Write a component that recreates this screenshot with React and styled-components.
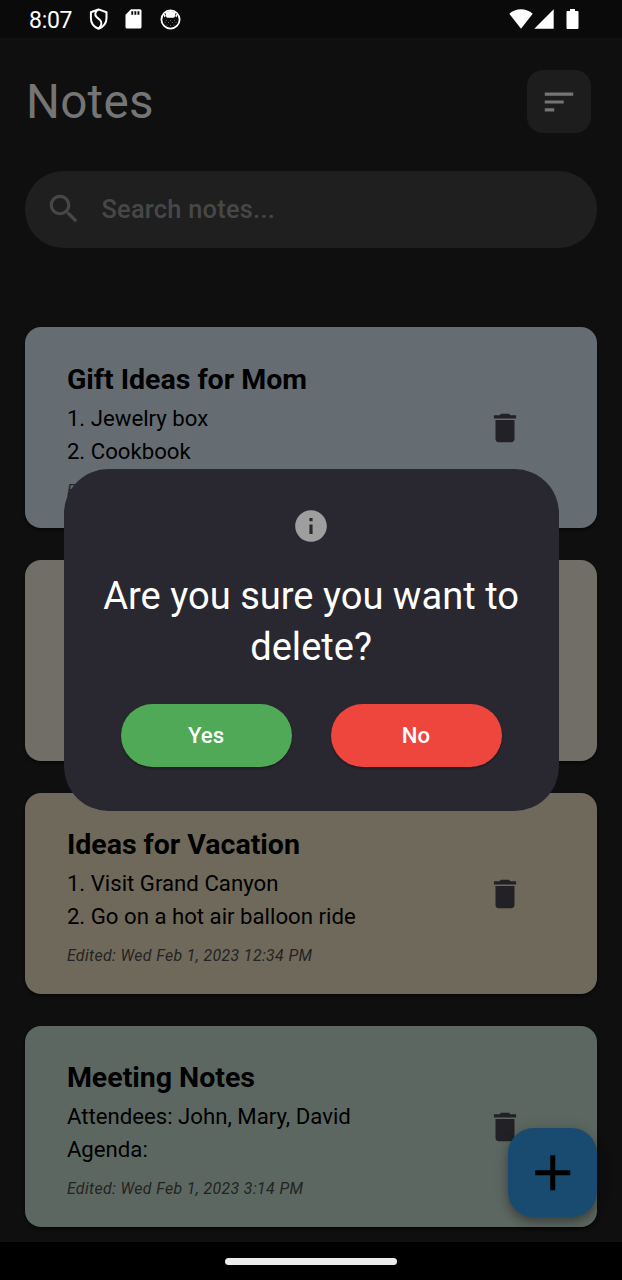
import React from "react";
import styled, { createGlobalStyle } from "styled-components";

const GlobalStyle = createGlobalStyle`
  * { box-sizing: border-box; }
  body { margin: 0; background: #0f0f0f; font-family: Roboto, "Liberation Sans", sans-serif; }
`;

const Screen = styled.div`
  position: relative;
  width: 622px;
  height: 1280px;
  overflow: hidden;
  display: flex;
  flex-direction: column;
  background: #0f0f0f;
`;

const StatusBar = styled.header`
  height: 38px;
  flex: none;
  display: flex;
  justify-content: space-between;
  padding: 0 43.5px 0 29px;
  background: #0a0a0a;
  color: #fff;
`;

const StatusGroup = styled.div`
  display: flex;
  align-items: center;
  svg { display: block; }
`;

const Clock = styled.span`
  font-size: 23px;
  line-height: 38px;
  letter-spacing: -0.3px;
  width: 60px;
  padding-top: 3px;
`;

const StatusIcons = styled(StatusGroup)`
  gap: ${(p) => p.$gap}px;
`;

const Content = styled.main`
  flex: 1;
  min-height: 0;
  overflow: hidden;
  padding: 32px 25px 0 25.4px;
`;

const TitleRow = styled.div`
  display: flex;
  justify-content: space-between;
  align-items: center;
  height: 63px;
  padding-right: 6.5px;
`;

const PageTitle = styled.h1`
  margin: 2px 0 0 0.5px;
  font-weight: 400;
  font-size: 47.6px;
  line-height: 63px;
  letter-spacing: 0.3px;
  color: #757575;
`;

const SortButton = styled.button`
  width: 63.5px;
  height: 63.5px;
  padding: 0;
  border: 0;
  border-radius: 16px;
  background: #1d1d1d;
  display: grid;
  place-items: center;
`;

const SearchField = styled.div`
  margin-top: 38px;
  height: 76.5px;
  border-radius: 38px;
  background: #1f1f1f;
  display: flex;
  align-items: center;
  padding-left: 19.2px;
  gap: 18.9px;
  font-size: 25.4px;
  font-weight: 500;
  letter-spacing: 0.24px;
  color: #474747;
`;

const NoteList = styled.div`
  margin-top: 79.5px;
  display: flex;
  flex-direction: column;
  gap: 31.6px;
`;

const NoteCard = styled.article`
  height: 201.4px;
  flex: none;
  border-radius: 16px;
  background: ${(p) => p.$color};
  box-shadow: 0 2px 3px rgba(0, 0, 0, 0.5);
  padding: 31.5px 73px 0 41.5px;
  display: flex;
  justify-content: space-between;
`;

const NoteTitle = styled.h2`
  margin: 0;
  font-size: 28.56px;
  line-height: 42px;
  font-weight: 700;
  letter-spacing: -0.03px;
  color: #000;
`;

const NoteBody = styled.p`
  margin: 1px 0 0;
  font-size: 22.2px;
  line-height: 33px;
  color: #000;
  white-space: pre-line;
`;

const NoteDate = styled.p`
  margin: 12px 0 0;
  font-size: 15.9px;
  line-height: 22px;
  font-style: italic;
  letter-spacing: 0.37px;
  color: #232323;
`;

const DeleteButton = styled.button`
  align-self: flex-start;
  margin-top: 50.5px;
  padding: 0;
  border: 0;
  background: none;
  svg { display: block; }
`;

const NavBar = styled.footer`
  height: 38px;
  flex: none;
  background: #000;
  display: flex;
  justify-content: center;
  padding-top: 16px;
`;

const Handle = styled.div`
  width: 172px;
  height: 6.5px;
  border-radius: 4px;
  background: #ececec;
`;

const AddButton = styled.button`
  position: absolute;
  left: 508px;
  top: 1128px;
  width: 89px;
  height: 89px;
  padding: 0;
  border: 0;
  border-radius: 25.4px;
  background: #194a70;
  box-shadow: 0 5px 10px rgba(0, 0, 0, 0.3), 0 2px 16px rgba(0, 0, 0, 0.12);
  display: grid;
  place-items: center;
`;

const Dialog = styled.section`
  position: absolute;
  left: 63.6px;
  top: 469px;
  width: 495px;
  height: 342px;
  border-radius: 44.4px;
  background: #29272f;
  display: flex;
  flex-direction: column;
  align-items: center;
  padding-top: 38px;
  svg { display: block; }
`;

const Question = styled.p`
  margin: 26.4px 0 0;
  width: 419px;
  text-align: center;
  font-size: 38.1px;
  line-height: 50.8px;
  color: #fff;
  white-space: nowrap;
`;

const Actions = styled.div`
  margin-top: 31px;
  display: flex;
  gap: 38.9px;
`;

const ActionButton = styled.button`
  width: 171px;
  height: 63.5px;
  padding: 0 0 1px;
  border: 0;
  border-radius: 32px;
  background: ${(p) => p.$color};
  box-shadow: 0 1.5px 2px rgba(0, 0, 0, 0.3);
  font-family: inherit;
  font-size: 22.2px;
  font-weight: 500;
  letter-spacing: 0.1px;
  color: #fff;
`;

const Icon = ({ d, color, size = 38 }) => (
  <svg width={size} height={size} viewBox="0 0 24 24" fill={color}>
    <path d={d} />
  </svg>
);

const paths = {
  sort: "M3 18h6v-2H3v2zM3 6v2h18V6H3zm0 7h12v-2H3v2z",
  search:
    "M15.5 14h-.79l-.28-.27C15.41 12.59 16 11.11 16 9.5 16 5.91 13.09 3 9.5 3S3 5.91 3 9.5 5.91 16 9.5 16c1.61 0 3.09-.59 4.23-1.57l.27.28v.79l5 4.99L20.49 19l-4.99-5zm-6 0C7.01 14 5 11.99 5 9.5S7.01 5 9.5 5 14 7.01 14 9.5 11.99 14 9.5 14z",
  trash:
    "M6 19c0 1.1.9 2 2 2h8c1.1 0 2-.9 2-2V7H6v12zM19 4h-3.5l-1-1h-5l-1 1H5v2h14V4z",
  info: "M12 2C6.48 2 2 6.48 2 12s4.480 10 10 10 10-4.480 10-10S17.520 2 12 2zm1 15h-2v-6h2v6zm0-8h-2V7h2v2z",
  plus: "M18.900 12.900h-6v6h-2v-6h-6v-2h6v-6h2v6h6z",
};

const ShieldIcon = () => (
  <svg width="19" height="22" viewBox="0 0 19 22" fill="none" stroke="#fff" strokeWidth="2">
    <path d="M9.500 1.400 1.900 4.200V10.200C1.900 15 4.800 18.900 9.500 20.700 14.200 18.900 17.500 15 17.500 10.200V4.200Z" strokeLinejoin="round" />
    <path d="M9.500 1.500C5.800 3.700 5.300 7 7.800 9.300L11 12C13.400 14.200 12.700 17.600 9.700 20.500" />
  </svg>
);

const SdCardIcon = () => (
  <svg width="17" height="20" viewBox="0 0 17 20">
    <path d="M6 .2H15Q16.500.2 16.500 1.700V18Q16.500 19.500 15 19.500H2Q.5 19.500.5 18V5.700Z" fill="#fff" />
    <path d="M6.300 2.300H8.200V5.800H6.300ZM9.400 2.300H11.300V5.800H9.400ZM12.500 2.300H14.400V5.800H12.500Z" fill="#0a0a0a" />
  </svg>
);

const CatIcon = () => (
  <svg width="21" height="21" viewBox="0 0 21 21">
    <circle cx="10.500" cy="10.500" r="9.100" fill="#0a0a0a" stroke="#fff" strokeWidth="1.800" />
    <path d="M3.600 5.400A8.800 8.800 0 0 1 17.400 5.400L16.600 8.500 15.200 7 14 8.700H7L5.800 7 4.400 8.500Z" fill="#fff" />
    <path d="M5 4.200 5.600 6.500M16 4.200 15.400 6.500" stroke="#0a0a0a" strokeWidth=".9" />
    <g fill="#888">
      <circle cx="6.500" cy="11.300" r=".5" /><circle cx="10.500" cy="11.500" r=".5" /><circle cx="14.500" cy="11.200" r=".5" />
      <circle cx="5" cy="13.300" r=".5" /><circle cx="8.500" cy="13.600" r=".5" /><circle cx="12.500" cy="13.500" r=".5" />
      <circle cx="16" cy="13.600" r=".5" /><circle cx="7" cy="16" r=".5" /><circle cx="10.500" cy="16.500" r=".5" /><circle cx="14" cy="16" r=".5" />
    </g>
  </svg>
);

const WifiIcon = () => (
  <svg width="24" height="20" viewBox="0 0 24 20">
    <path d="M12 19.700.3 4.700C3.500 1.700 7.500.2 12 .2S20.500 1.700 23.700 4.700Z" fill="#fff" />
  </svg>
);

const SignalIcon = () => (
  <svg width="20" height="20" viewBox="0 0 20 20">
    <path d="M19.700.3V19.700H.3Z" fill="#fff" />
  </svg>
);

const BatteryIcon = () => (
  <svg width="13" height="20" viewBox="0 0 13 20">
    <path d="M4 0H9V2H11.500Q12.500 2 12.500 3V18.700Q12.500 19.900 11.500 19.900H1.500Q.5 19.900.5 18.700V3Q.5 2 1.500 2H4Z" fill="#fff" />
  </svg>
);

const notes = [
  { title: "Gift Ideas for Mom", body: "1. Jewelry box\n2. Cookbook", date: "Edited: Wed Feb 1, 2023 4:00 PM", color: "#656d73" },
  { title: "", body: "", date: "", color: "#706e66" },
  { title: "Ideas for Vacation", body: "1. Visit Grand Canyon\n2. Go on a hot air balloon ride", date: "Edited: Wed Feb 1, 2023 12:34 PM", color: "#6f695b" },
  { title: "Meeting Notes", body: "Attendees: John, Mary, David\nAgenda:", date: "Edited: Wed Feb 1, 2023 3:14 PM", color: "#5d6761" },
];

function Note({ note }) {
  return (
    <NoteCard $color={note.color}>
      {note.title && (
        <>
          <div>
            <NoteTitle>{note.title}</NoteTitle>
            <NoteBody>{note.body}</NoteBody>
            <NoteDate>{note.date}</NoteDate>
          </div>
          <DeleteButton aria-label="Delete">
            <Icon d={paths.trash} color="#222126" />
          </DeleteButton>
        </>
      )}
    </NoteCard>
  );
}

export default function App() {
  return (
    <Screen>
      <GlobalStyle />
      <StatusBar>
        <StatusGroup>
          <Clock>8:07</Clock>
          <StatusIcons $gap={17.4}>
            <ShieldIcon />
            <SdCardIcon />
            <CatIcon />
          </StatusIcons>
        </StatusGroup>
        <StatusIcons $gap={11.5}>
          <StatusIcons $gap={1.5}>
            <WifiIcon />
            <SignalIcon />
          </StatusIcons>
          <BatteryIcon />
        </StatusIcons>
      </StatusBar>
      <Content>
        <TitleRow>
          <PageTitle>Notes</PageTitle>
          <SortButton aria-label="Sort">
            <Icon d={paths.sort} color="#757575" />
          </SortButton>
        </TitleRow>
        <SearchField>
          <Icon d={paths.search} color="#474747" />
          <span>Search notes...</span>
        </SearchField>
        <NoteList>
          {notes.map((note, i) => (
            <Note key={i} note={note} />
          ))}
        </NoteList>
      </Content>
      <NavBar>
        <Handle />
      </NavBar>
      <AddButton aria-label="Add note">
        <Icon d={paths.plus} color="#000" size={60} />
      </AddButton>
      <Dialog role="dialog">
        <Icon d={paths.info} color="#9e9e9e" />
        <Question>
          Are you sure you want to
          <br />
          delete?
        </Question>
        <Actions>
          <ActionButton $color="#4fa956">Yes</ActionButton>
          <ActionButton $color="#ee453c">No</ActionButton>
        </Actions>
      </Dialog>
    </Screen>
  );
}
